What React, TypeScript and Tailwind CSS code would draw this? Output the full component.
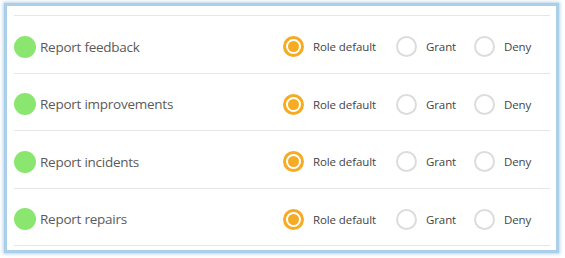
import React from "react";

const rows = ["Report feedback", "Report improvements", "Report incidents", "Report repairs"];

function Radio({ selected }: { selected?: boolean }) {
  if (selected) {
    return (
      <span className="flex h-[21px] w-[21px] shrink-0 items-center justify-center rounded-full border-[3px] border-[#f5ab22] bg-white">
        <span className="h-[11px] w-[11px] rounded-full bg-[#f5ab22]" />
      </span>
    );
  }
  return <span className="h-[21px] w-[21px] shrink-0 rounded-full border-2 border-[#dcdcdc] bg-white" />;
}

export default function App() {
  return (
    <div className="h-[258px] w-[565px] bg-white pl-[4px] pt-[3px]" style={{ fontFamily: '"Open Sans", "Noto Sans", sans-serif' }}>
      <div className="h-[250px] w-[555px] border-[3px] border-[#a9cfe9] bg-white pl-[7px] pr-[6px] pt-[9px] shadow-[0_0_3px_1px_rgba(120,170,210,0.5)]">
        <div className="border-t border-[#e6e6e6]">
          {rows.map((r) => (
            <div key={r} className="flex h-[57.5px] items-center border-b border-[#e6e6e6] pt-[5px]">
              <div className="flex w-[269px] items-center">
                <span className="h-[22px] w-[22px] shrink-0 rounded-full bg-[#8ae66f]" />
                <span className="ml-[4px] text-[13.5px] tracking-[-0.25px] text-[#5a5a5a]">{r}</span>
              </div>
              <div className="flex items-center">
                <Radio selected />
                <span className="ml-[9px] w-[83px] text-[11.5px] tracking-[-0.1px] text-[#444]">Role default</span>
                <Radio />
                <span className="ml-[9px] w-[48px] text-[11.5px] tracking-[-0.1px] text-[#444]">Grant</span>
                <Radio />
                <span className="ml-[9px] text-[11.5px] tracking-[-0.1px] text-[#444]">Deny</span>
              </div>
            </div>
          ))}
        </div>
      </div>
    </div>
  );
}
